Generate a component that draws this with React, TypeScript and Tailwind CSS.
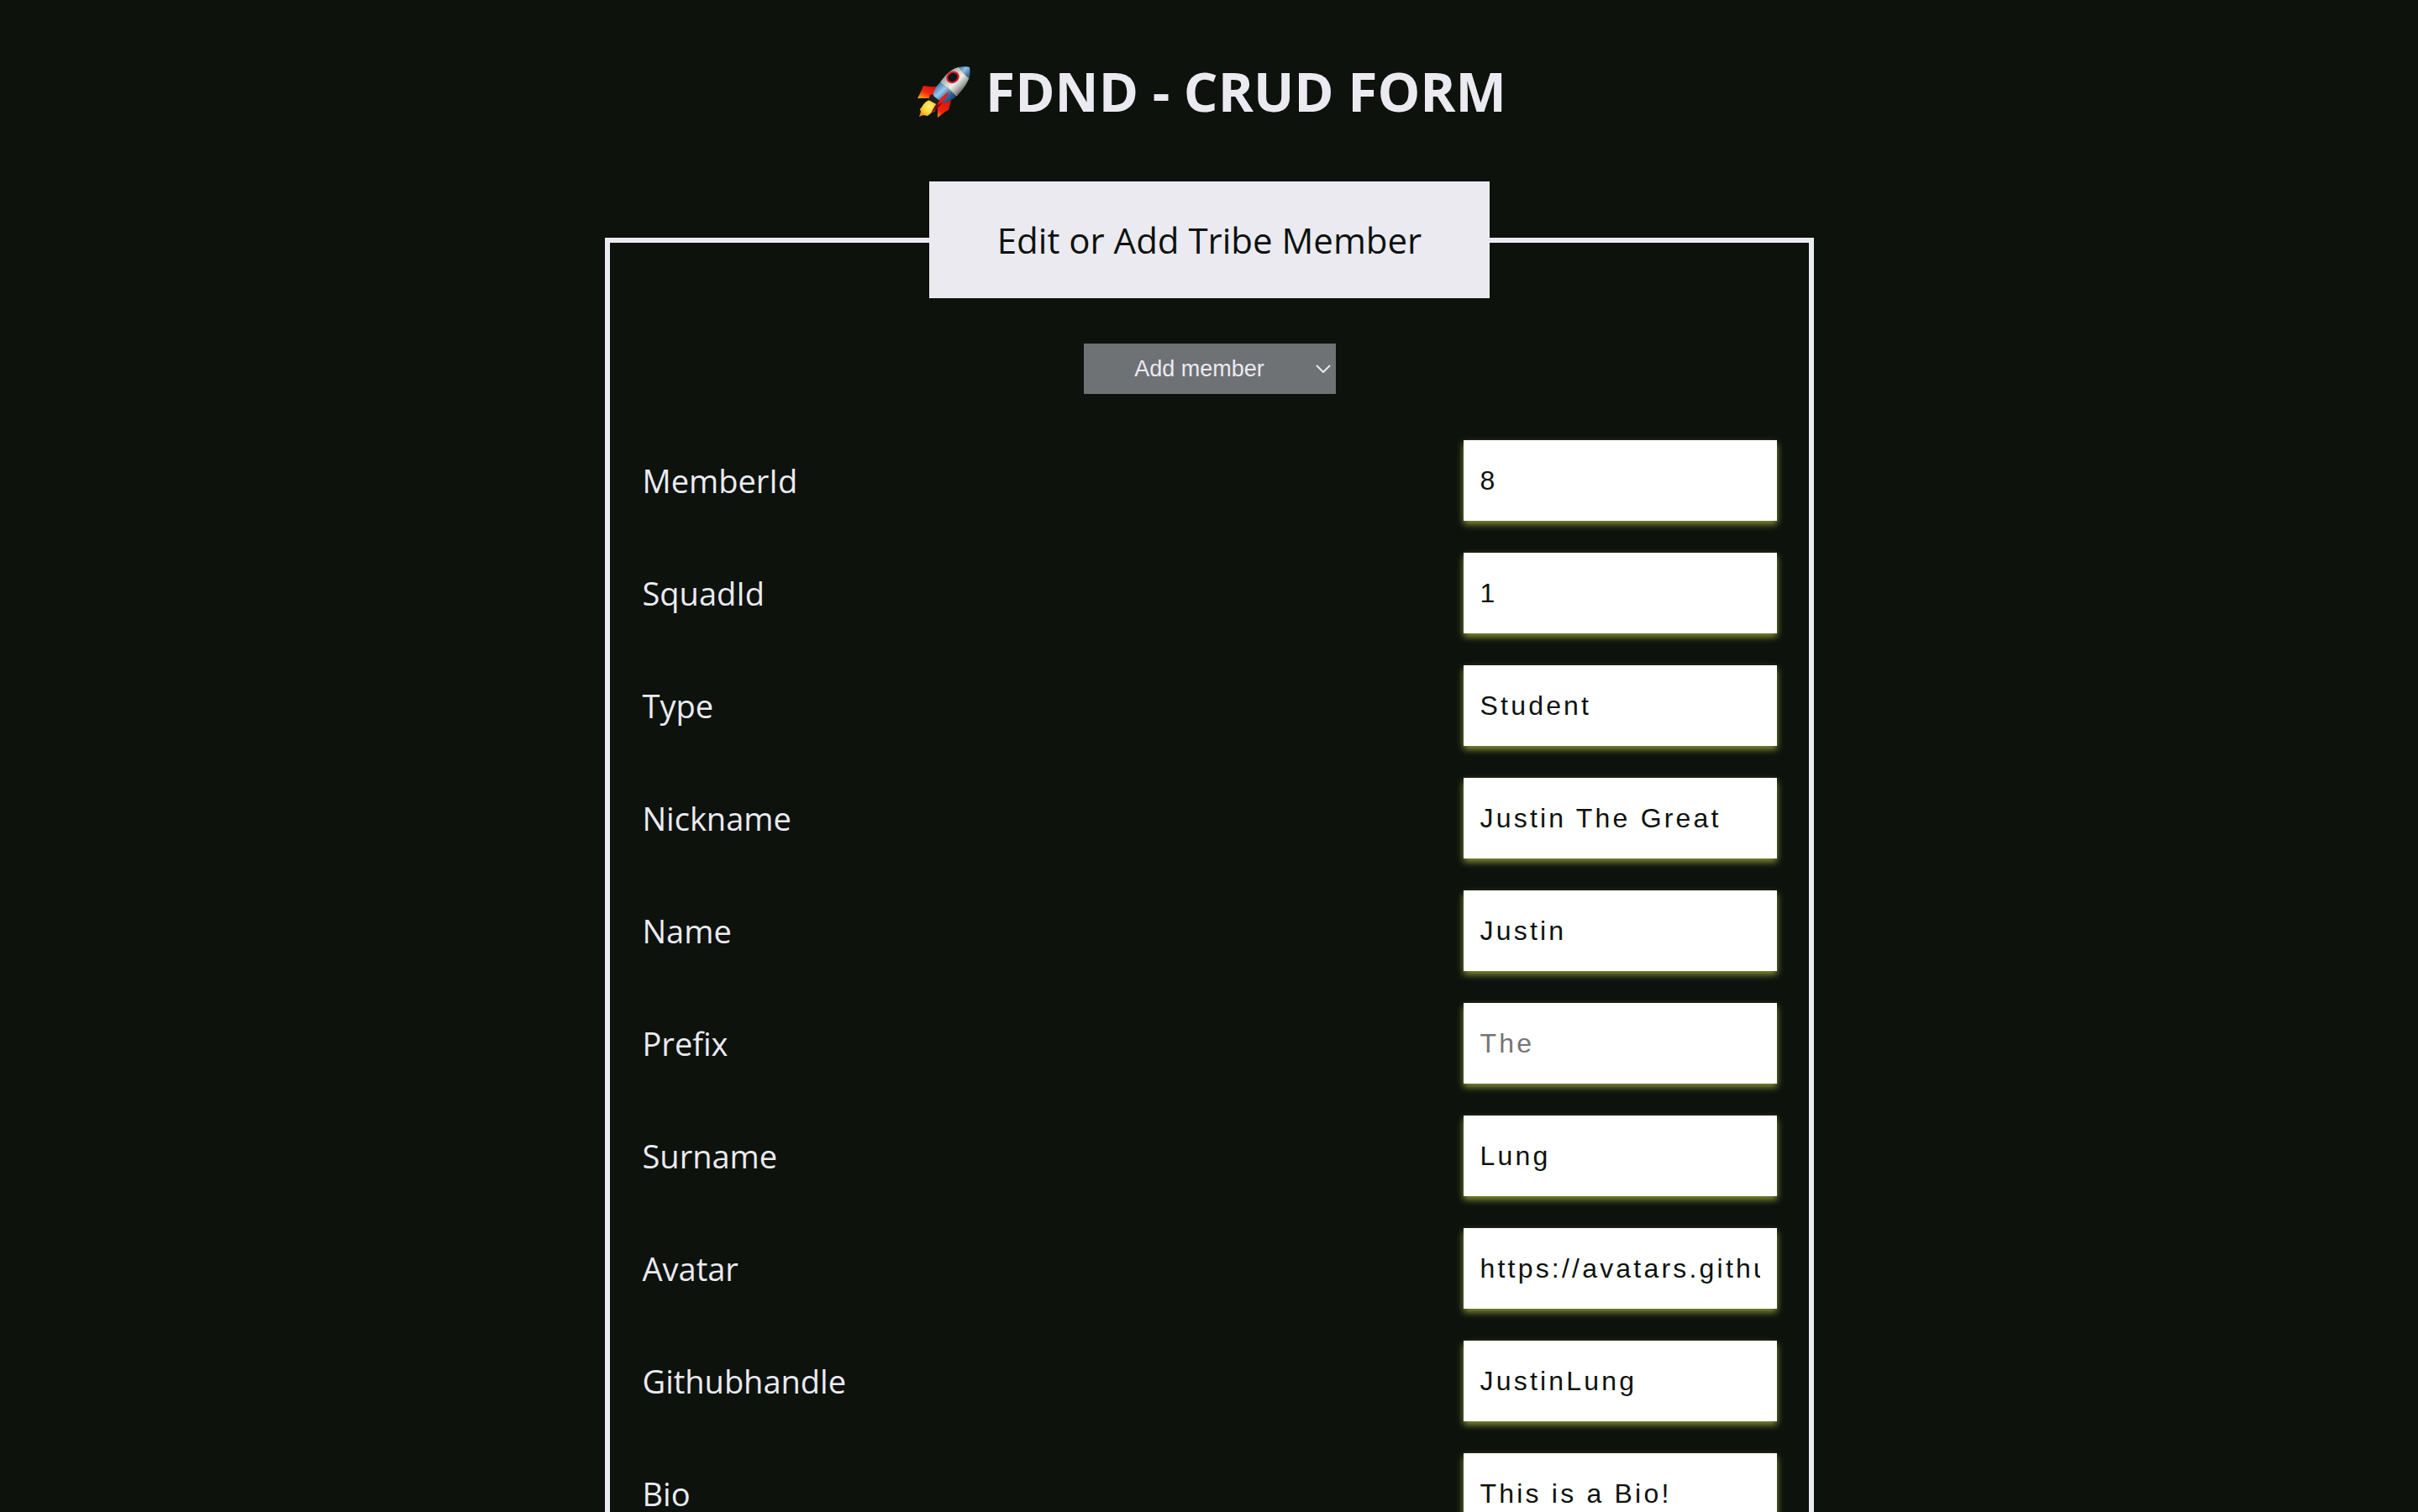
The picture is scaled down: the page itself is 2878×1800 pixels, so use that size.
const fields = [
  { id: "memberId", label: "MemberId", value: "8" },
  { id: "squadId", label: "SquadId", value: "1" },
  { id: "type", label: "Type", value: "Student" },
  { id: "nickname", label: "Nickname", value: "Justin The Great" },
  { id: "name", label: "Name", value: "Justin" },
  { id: "prefix", label: "Prefix", value: "", placeholder: "The" },
  { id: "surname", label: "Surname", value: "Lung" },
  { id: "avatar", label: "Avatar", value: "https://avatars.githubusercontent.com" },
  { id: "githubHandle", label: "Githubhandle", value: "JustinLung" },
  { id: "bio", label: "Bio", value: "This is a Bio!" },
];

function Rocket() {
  return (
    <svg viewBox="0 0 76 76" className="size-19 shrink-0" aria-hidden="true">
      <defs>
        <linearGradient id="hull" x1="36" y1="14" x2="60" y2="38" gradientUnits="userSpaceOnUse">
          <stop offset="0" stopColor="#6f7478" />
          <stop offset="0.3" stopColor="#b4b8b8" />
          <stop offset="0.6" stopColor="#f0f1ee" />
          <stop offset="0.8" stopColor="#b4b6b3" />
          <stop offset="1" stopColor="#5f6466" />
        </linearGradient>
        <linearGradient id="blue" x1="28" y1="32" x2="46" y2="52" gradientUnits="userSpaceOnUse">
          <stop offset="0" stopColor="#3f78b0" />
          <stop offset="0.35" stopColor="#9cc8ea" />
          <stop offset="0.65" stopColor="#3d70a3" />
          <stop offset="1" stopColor="#173a63" />
        </linearGradient>
        <linearGradient id="nose" x1="57" y1="8" x2="70" y2="20" gradientUnits="userSpaceOnUse">
          <stop offset="0" stopColor="#3b6fa6" />
          <stop offset="0.4" stopColor="#8fc1ea" />
          <stop offset="1" stopColor="#1d4a80" />
        </linearGradient>
        <linearGradient id="fin" x1="22" y1="30" x2="14" y2="48" gradientUnits="userSpaceOnUse">
          <stop offset="0" stopColor="#d8130a" />
          <stop offset="0.5" stopColor="#f5260c" />
          <stop offset="1" stopColor="#ffa51e" />
        </linearGradient>
        <linearGradient id="finRight" x1="44" y1="48" x2="32" y2="69" gradientUnits="userSpaceOnUse">
          <stop offset="0" stopColor="#d8140a" />
          <stop offset="0.7" stopColor="#f0240c" />
          <stop offset="1" stopColor="#ff9a20" />
        </linearGradient>
        <radialGradient id="flame" cx="21" cy="56" r="15" gradientUnits="userSpaceOnUse">
          <stop offset="0" stopColor="#fff27a" />
          <stop offset="0.55" stopColor="#ffcf30" />
          <stop offset="1" stopColor="#f57a10" />
        </radialGradient>
      </defs>
      <path d="M32 31 C26 33 20 32 14 31 C12 36 10 41 7 46 L26 46 Z" fill="url(#fin)" />
      <path d="M37 50 L47 48 C46 53 45 57 44 60 C39 62 35 66 31 69 C31 63 31 60 31 57 Z" fill="url(#finRight)" />
      <path d="M21 48 C14 51 13 56 10 59 L11 62 L9 68 L14 66 L19 67 L24 63 L27 62 L34 52 Z" fill="url(#flame)" />
      <path d="M22 42 L27 41 L36 51 L33 55 L20 48 Z" fill="#1c2123" />
      <path d="M34 27 C28 33 25 40 26 43 L37 52 C45 50 50 47 54 43 Z" fill="url(#blue)" />
      <path d="M56 9 C45 12 39 20 34 27 L54 43 C62 35 67 27 69 20 Z" fill="url(#hull)" />
      <path d="M55 9 C60 8 66 8 69 9 C70 13 70 18 68 23 Z" fill="url(#nose)" />
      <path d="M55 9 L68 23 M42 32 L54 43" stroke="#c9b67a" strokeWidth="1" fill="none" />
      <ellipse cx="49" cy="21" rx="8" ry="7" transform="rotate(-30 49 21)" fill="#dc1c22" />
      <ellipse cx="49" cy="21" rx="5.8" ry="5" transform="rotate(-30 49 21)" fill="#10151a" />
      <path d="M44 39 C36 44 28 52 23 64 C31 59 38 51 44 39 Z" fill="#7a0c08" />
      <path d="M44 38 C37 43 33 48 31 54 C38 51 42 45 44 38 Z" fill="#ee1c16" />
    </svg>
  );
}

export default function App() {
  return (
    <main className="flex h-screen flex-col items-center overflow-hidden bg-[#0d120d] pt-16 font-['Open_Sans',sans-serif] text-[#ebeaf1]">
      <h1 className="flex items-center gap-3 text-[64px] leading-[90px] font-bold">
        <Rocket />
        FDND - CRUD FORM
      </h1>

      <form className="mt-[62px] w-1/2">
        <fieldset className="flex w-full flex-col border-[6px] border-[#ebeaf1] pr-[38px] pl-[39px] pb-12">
          <legend className="mx-auto bg-[#ebeaf1] px-[81px] py-10 text-[42px] leading-[59px] text-[#0d120d]">
            Edit or Add Tribe Member
          </legend>

          <div className="relative mt-[54px] mb-[55px] w-[300px] self-center">
            <select
              aria-label="Member"
              className="h-[60px] w-full appearance-none bg-[#6e7275] pr-6 text-center font-['Liberation_Sans',sans-serif] text-[27px]"
            >
              <option>Add member</option>
            </select>
            <svg
              viewBox="0 0 18 10"
              className="pointer-events-none absolute top-[25px] right-[6px] h-[10px] w-[18px]"
              fill="none"
              stroke="currentColor"
              strokeWidth="2"
              aria-hidden="true"
            >
              <path d="M1 1 L9 9 L17 1" />
            </svg>
          </div>

          <div className="flex flex-col gap-[38px]">
            {fields.map((field) => (
              <div key={field.id} className="flex items-center justify-between">
                <label htmlFor={field.id} className="text-[38px] leading-[56px]">
                  {field.label}
                </label>
                <input
                  id={field.id}
                  type="text"
                  defaultValue={field.value}
                  placeholder={field.placeholder}
                  className="h-24 w-[373px] bg-white px-5 font-['Liberation_Sans',sans-serif] text-[32px] tracking-widest text-[#0d120d] shadow-[0_4px_8px_#8a9638] placeholder:text-[#757575]"
                />
              </div>
            ))}
          </div>
        </fieldset>
      </form>
    </main>
  );
}
